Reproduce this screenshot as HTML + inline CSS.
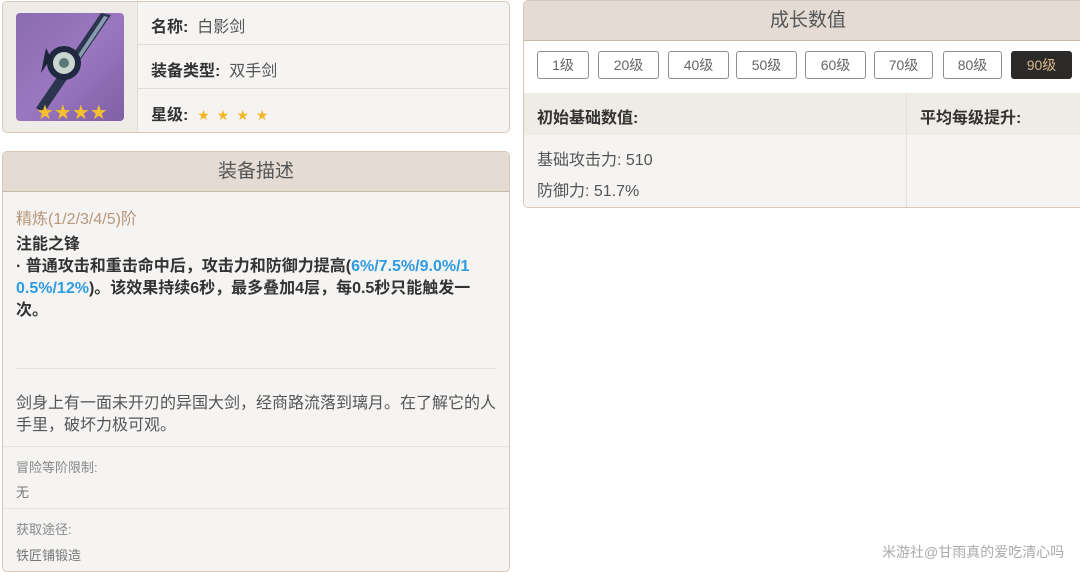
<!DOCTYPE html>
<html><head><meta charset="utf-8"><style>
*{margin:0;padding:0;box-sizing:border-box}
body{width:1080px;height:572px;background:#fff;font-family:"Liberation Sans","Noto Sans CJK SC",sans-serif;position:relative;overflow:hidden;color:#333}
.abs{position:absolute}
.card{position:absolute;border:1px solid #d7c8b9;border-radius:5px;background:#f5f4f3;overflow:hidden}
.hdr{position:absolute;left:0;right:0;top:0;height:40px;background:#e4dcd4;border-bottom:1px solid #c9b8a6;text-align:center;line-height:40px;font-size:19px;color:#555}
.lbl{font-weight:bold;font-size:16px;color:#333}
.btn{position:absolute;top:50px;height:28px;border:1px solid #8e8e8e;border-radius:3px;background:#fff;font-size:14px;color:#666;text-align:center;line-height:26px}
.t{position:absolute;white-space:nowrap}
</style></head><body>
<div class="card" style="left:2px;top:1px;width:508px;height:132px;">
 <div class="abs" style="left:0;top:0;width:135px;height:130px;background:#efebe6;border-right:1px solid #e0dbd5"></div>
 <div class="abs" style="left:13px;top:11px;width:108px;height:108px;border-radius:4px;background:linear-gradient(135deg,#8a6bb0,#9b77c0 50%,#7f5fa6);overflow:hidden">
  <svg width="108" height="108" viewBox="0 0 108 108">
   <path d="M95 2 L85 0 L20 95 L28 100 Z" fill="#2c3550"/>
   <path d="M92 4 L88 3 L60 45 L63 47 Z" fill="#8a9cb0"/>
   <circle cx="48" cy="50" r="17" fill="#1f2a40"/>
   <circle cx="48" cy="50" r="11" fill="#c9d7d0"/>
   <circle cx="48" cy="50" r="5" fill="#5a7a78"/>
   <path d="M30 35 L25 60 L35 45Z M65 60 L80 75 L60 55Z" fill="#1c2438"/>
   <text x="20" y="106" font-size="20" fill="#f5c030" font-family="DejaVu Sans">★★★★</text>
  </svg>
 </div>
 <div class="abs" style="left:135px;top:42px;right:0;height:1px;background:#e2ddd7"></div>
 <div class="abs" style="left:135px;top:86px;right:0;height:1px;background:#e2ddd7"></div>
 <div class="t" style="left:148px;top:11px;font-size:16px"><b>名称:</b>&nbsp;&nbsp;<span style="color:#555">白影剑</span></div>
 <div class="t" style="left:148px;top:55px;font-size:16px"><b>装备类型:</b>&nbsp;&nbsp;<span style="color:#555">双手剑</span></div>
 <div class="t" style="left:148px;top:99px;font-size:16px"><b>星级:</b>&nbsp;&nbsp;<span style="color:#f3b523;font-size:14px;letter-spacing:7px;font-family:'DejaVu Sans'">★★★★</span></div>
</div>
<div class="card" style="left:2px;top:151px;width:508px;height:421px;">
 <div class="hdr">装备描述</div>
 <div class="t" style="left:13px;top:53px;font-size:16px;color:#b8977a">精炼(1/2/3/4/5)阶</div>
 <div class="abs" style="left:13px;top:82px;width:490px;font-size:16px;font-weight:bold;line-height:22px;color:#333;white-space:nowrap">注能之锋<br>· 普通攻击和重击命中后，攻击力和防御力提高(<span style="color:#2f9be0">6%/7.5%/9.0%/1<br>0.5%/12%</span>)。该效果持续6秒，最多叠加4层，每0.5秒只能触发一<br>次。</div>
 <div class="abs" style="left:13px;top:216px;width:480px;height:1px;background:#e4e0dc"></div>
 <div class="abs" style="left:13px;top:241px;width:495px;font-size:16px;line-height:22px;color:#555;white-space:nowrap">剑身上有一面未开刃的异国大剑，经商路流落到璃月。在了解它的人<br>手里，破坏力极可观。</div>
 <div class="abs" style="left:0;top:294px;right:0;height:1px;background:#e4e0dc"></div>
 <div class="t" style="left:13px;top:305px;font-size:13px;color:#888">冒险等阶限制:</div>
 <div class="t" style="left:13px;top:330px;font-size:13px;color:#777">无</div>
 <div class="abs" style="left:0;top:356px;right:0;height:1px;background:#e4e0dc"></div>
 <div class="t" style="left:13px;top:367px;font-size:13px;color:#888">获取途径:</div>
 <div class="t" style="left:13px;top:393px;font-size:13px;color:#777">铁匠铺锻造</div>
</div>
<div class="card" style="left:523px;top:0px;width:570px;height:208px;background:#fff">
 <div class="hdr">成长数值</div>
 <div class="btn" style="left:13px;width:52px">1级</div>
 <div class="btn" style="left:74px;width:61px">20级</div>
 <div class="btn" style="left:144px;width:61px">40级</div>
 <div class="btn" style="left:212px;width:61px">50级</div>
 <div class="btn" style="left:281px;width:61px">60级</div>
 <div class="btn" style="left:350px;width:59px">70级</div>
 <div class="btn" style="left:419px;width:59px">80级</div>
 <div class="btn" style="left:487px;width:61px;background:#2b2a28;border-color:#2b2a28;color:#d9b98a">90级</div>
 <div class="abs" style="left:0;top:92px;right:0;height:42px;background:#efebe6"></div>
 <div class="abs" style="left:0;top:134px;right:0;height:72px;background:#f5f4f3"></div>
 <div class="abs" style="left:382px;top:92px;width:1px;height:114px;background:#e4dfda"></div>
 <div class="t lbl" style="left:13px;top:103px">初始基础数值:</div>
 <div class="t lbl" style="left:396px;top:103px">平均每级提升:</div>
 <div class="t" style="left:13px;top:145px;font-size:16px;color:#555">基础攻击力: 510</div>
 <div class="t" style="left:13px;top:176px;font-size:16px;color:#555">防御力: 51.7%</div>
</div>
<div class="t" style="left:882px;top:542px;font-size:14px;color:#aaa">米游社@甘雨真的爱吃清心吗</div>
</body></html>
